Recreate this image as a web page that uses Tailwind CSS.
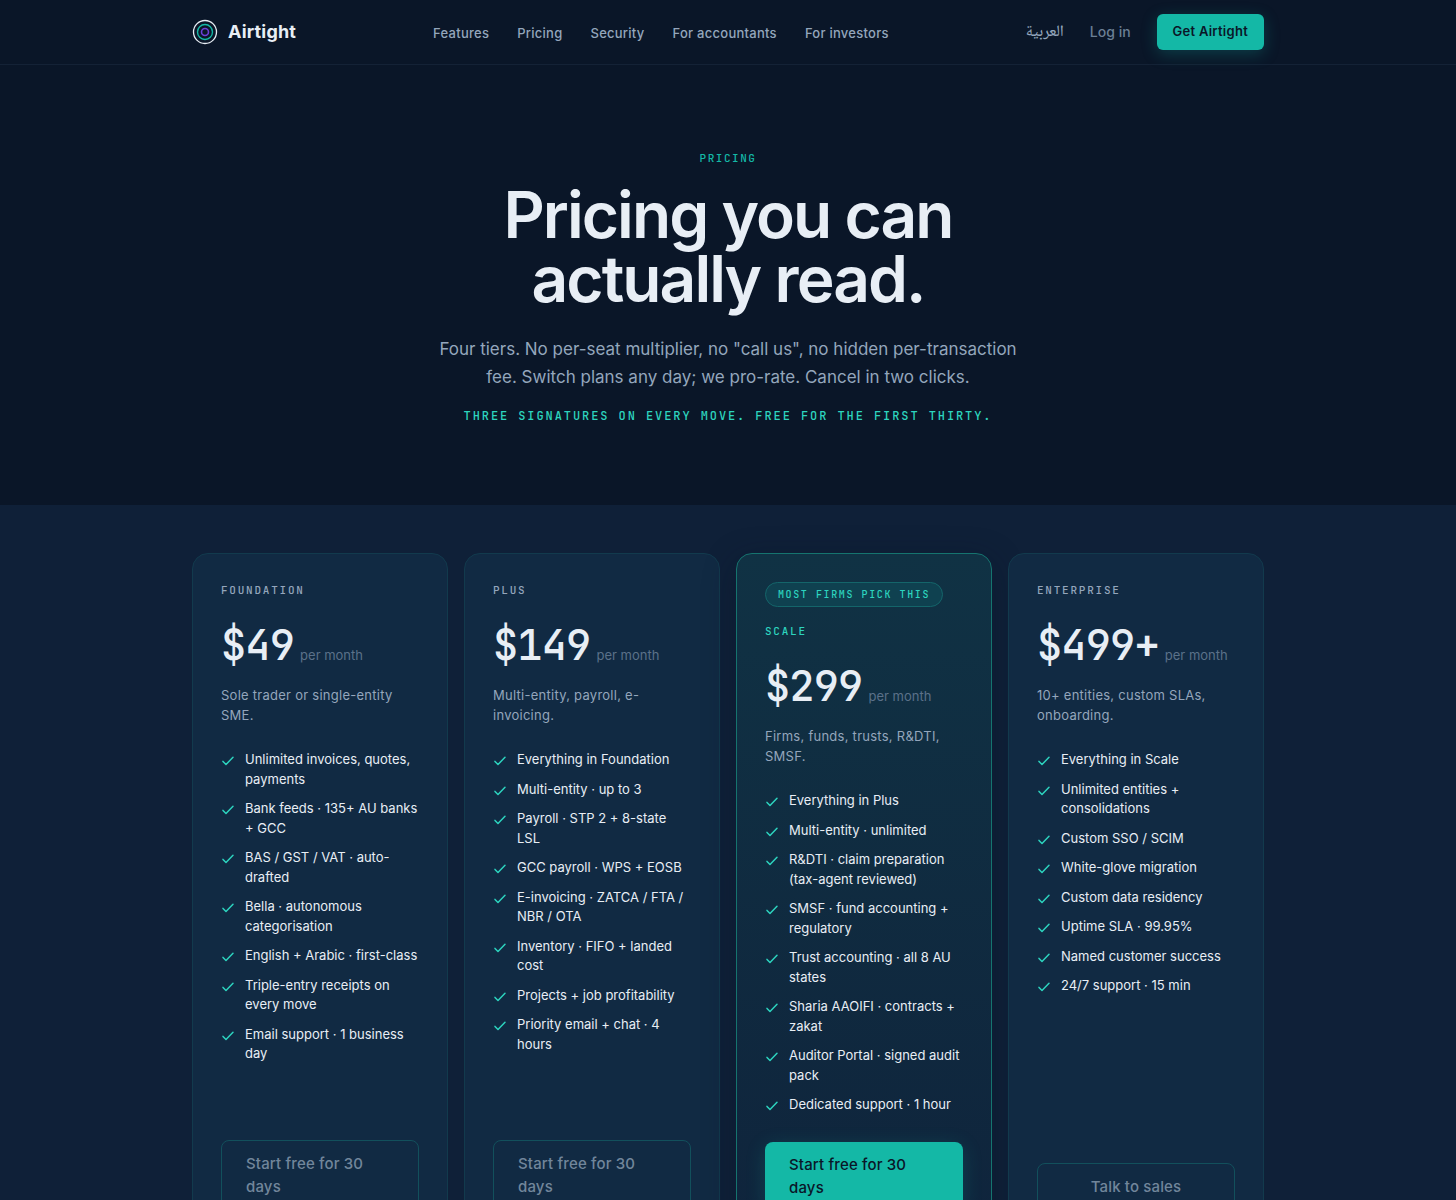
<!DOCTYPE html>
<html lang="en">
<head>
  <meta charset="UTF-8">
  <meta name="viewport" content="width=device-width, initial-scale=1.0">
  <title>Airtight | Pricing</title>
  <script src="https://cdn.jsdelivr.net/npm/@tailwindcss/browser@4"></script>
</head>
<body class="bg-[#0a1628] text-[#e8eef5] font-[Inter,sans-serif]">
  <svg class="hidden">
    <symbol id="check" viewBox="0 0 14 14">
      <path d="M2 7.4 5 10.5 12 3.3" fill="none" stroke="#2dd4bf" stroke-width="1.5" stroke-linecap="round" stroke-linejoin="round"/>
    </symbol>
  </svg>

  <header class="border-b border-[#142236]">
    <div class="max-w-[1120px] h-16 mx-auto px-6 flex items-center justify-between">
      <a href="#" class="flex items-center gap-2.5 text-lg font-bold tracking-[0.01em]">
        <svg class="w-[26px] h-[26px]" viewBox="0 0 26 26" fill="none">
          <circle cx="13" cy="13" r="11.5" stroke="#e8eef5" stroke-width="1.3"/>
          <circle cx="13" cy="13" r="7.5" stroke="#14b8a6" stroke-width="1.4"/>
          <circle cx="13" cy="13" r="3.5" stroke="#6d3fd8" stroke-width="1.6"/>
        </svg>
        Airtight
      </a>
      <nav class="flex gap-7 pt-0.5 text-[13px] leading-5 font-medium tracking-[0.02em] text-[#94a6bc]">
        <a href="#">Features</a>
        <a href="#">Pricing</a>
        <a href="#">Security</a>
        <a href="#">For accountants</a>
        <a href="#">For investors</a>
      </nav>
      <div class="flex items-center gap-[26px] font-medium">
        <a href="#" class="pt-0.5 font-['Noto_Naskh_Arabic','Noto_Sans_Arabic',Inter,serif] text-base text-[#94a6bc]">العربية</a>
        <a href="#" class="text-sm text-[#6b7f95]">Log in</a>
        <button type="button" class="h-9 px-4 rounded-md bg-[#14b8a6] text-[13px] font-semibold tracking-[0.02em] text-[#0a1628] shadow-[0_4px_16px_rgba(20,184,166,0.25)]">Get Airtight</button>
      </div>
    </div>
  </header>

  <section class="py-20 px-6 text-center">
    <p class="font-['JetBrains_Mono','Liberation_Mono',monospace] text-[11px] leading-[26px] font-medium tracking-[0.14em] text-[#14b8a6]">PRICING</p>
    <h1 class="max-w-[600px] mx-auto mt-3 text-[64px] leading-16 font-semibold tracking-[-0.03em]">Pricing you can actually read.</h1>
    <p class="max-w-[600px] mx-auto mt-6 text-[17px] leading-7 text-[#94a6bc]">Four tiers. No per-seat multiplier, no "call us", no hidden per-transaction fee. Switch plans any day; we pro-rate. Cancel in two clicks.</p>
    <p class="mt-4 font-['JetBrains_Mono','Liberation_Mono',monospace] text-xs leading-[18px] font-medium tracking-[0.16em] text-[#2dd4bf]">THREE SIGNATURES ON EVERY MOVE. FREE FOR THE FIRST THIRTY.</p>
  </section>

  <section class="bg-[#0f2038] py-12">
    <div class="max-w-[1120px] mx-auto px-6 grid grid-cols-4 gap-4">

      <article class="p-7 flex flex-col rounded-2xl border border-[#123a4d] bg-[#112a43]">
        <h2 class="font-['JetBrains_Mono','Liberation_Mono',monospace] text-[11px] leading-[17px] font-medium tracking-[0.16em] text-[#94a6bc]">FOUNDATION</h2>
        <p class="mt-6 flex items-baseline gap-1.5 text-[13px] text-[#5b7189]"><span class="font-['JetBrains_Mono','Liberation_Mono',monospace] text-[42px] leading-11 font-medium tracking-[-0.02em] text-[#e8eef5]">$49</span>per month</p>
        <p class="mt-[18px] text-[13px] leading-5 tracking-[0.02em] text-[#94a6bc]">Sole trader or single-entity SME.</p>
        <ul class="mt-[25px] mb-[27px] flex flex-col gap-2.5 text-[13px] leading-normal">
          <li class="flex gap-2.5"><svg class="w-3.5 h-3.5 mt-1 shrink-0"><use href="#check"/></svg>Unlimited invoices, quotes, payments</li>
          <li class="flex gap-2.5"><svg class="w-3.5 h-3.5 mt-1 shrink-0"><use href="#check"/></svg>Bank feeds · 135+ AU banks + GCC</li>
          <li class="flex gap-2.5"><svg class="w-3.5 h-3.5 mt-1 shrink-0"><use href="#check"/></svg>BAS / GST / VAT · auto-drafted</li>
          <li class="flex gap-2.5"><svg class="w-3.5 h-3.5 mt-1 shrink-0"><use href="#check"/></svg>Bella · autonomous categorisation</li>
          <li class="flex gap-2.5"><svg class="w-3.5 h-3.5 mt-1 shrink-0"><use href="#check"/></svg>English + Arabic · first-class</li>
          <li class="flex gap-2.5"><svg class="w-3.5 h-3.5 mt-1 shrink-0"><use href="#check"/></svg>Triple-entry receipts on every move</li>
          <li class="flex gap-2.5"><svg class="w-3.5 h-3.5 mt-1 shrink-0"><use href="#check"/></svg>Email support · 1 business day</li>
        </ul>
        <button type="button" class="mt-auto px-6 py-[11px] rounded-lg border border-[#12505c] text-left text-[15px] leading-[23px] font-medium tracking-[0.01em] text-[#71869b]">Start free for 30 days</button>
      </article>

      <article class="p-7 flex flex-col rounded-2xl border border-[#123a4d] bg-[#112a43]">
        <h2 class="font-['JetBrains_Mono','Liberation_Mono',monospace] text-[11px] leading-[17px] font-medium tracking-[0.16em] text-[#94a6bc]">PLUS</h2>
        <p class="mt-6 flex items-baseline gap-1.5 text-[13px] text-[#5b7189]"><span class="font-['JetBrains_Mono','Liberation_Mono',monospace] text-[42px] leading-11 font-medium tracking-[-0.02em] text-[#e8eef5]">$149</span>per month</p>
        <p class="mt-[18px] text-[13px] leading-5 tracking-[0.02em] text-[#94a6bc]">Multi-entity, payroll, e-invoicing.</p>
        <ul class="mt-[25px] mb-[27px] flex flex-col gap-2.5 text-[13px] leading-normal">
          <li class="flex gap-2.5"><svg class="w-3.5 h-3.5 mt-1 shrink-0"><use href="#check"/></svg>Everything in Foundation</li>
          <li class="flex gap-2.5"><svg class="w-3.5 h-3.5 mt-1 shrink-0"><use href="#check"/></svg>Multi-entity · up to 3</li>
          <li class="flex gap-2.5"><svg class="w-3.5 h-3.5 mt-1 shrink-0"><use href="#check"/></svg>Payroll · STP 2 + 8-state LSL</li>
          <li class="flex gap-2.5"><svg class="w-3.5 h-3.5 mt-1 shrink-0"><use href="#check"/></svg>GCC payroll · WPS + EOSB</li>
          <li class="flex gap-2.5"><svg class="w-3.5 h-3.5 mt-1 shrink-0"><use href="#check"/></svg>E-invoicing · ZATCA / FTA / NBR / OTA</li>
          <li class="flex gap-2.5"><svg class="w-3.5 h-3.5 mt-1 shrink-0"><use href="#check"/></svg>Inventory · FIFO + landed cost</li>
          <li class="flex gap-2.5"><svg class="w-3.5 h-3.5 mt-1 shrink-0"><use href="#check"/></svg>Projects + job profitability</li>
          <li class="flex gap-2.5"><svg class="w-3.5 h-3.5 mt-1 shrink-0"><use href="#check"/></svg>Priority email + chat · 4 hours</li>
        </ul>
        <button type="button" class="mt-auto px-6 py-[11px] rounded-lg border border-[#12505c] text-left text-[15px] leading-[23px] font-medium tracking-[0.01em] text-[#71869b]">Start free for 30 days</button>
      </article>

      <!-- highlighted tier -->
      <article class="p-7 flex flex-col items-start rounded-2xl border border-[#15746f] bg-linear-to-b from-[#103244] to-[#0f243c] shadow-[0_8px_32px_rgba(10,22,40,0.4)]">
        <p class="mb-4 px-3 py-1 rounded-full border border-[#14656a] bg-[#0f4150] font-['JetBrains_Mono','Liberation_Mono',monospace] text-[10px] leading-[15px] font-medium tracking-[0.16em] text-[#2dd4bf]">MOST FIRMS PICK THIS</p>
        <h2 class="font-['JetBrains_Mono','Liberation_Mono',monospace] text-[11px] leading-[17px] font-medium tracking-[0.16em] text-[#2dd4bf]">SCALE</h2>
        <p class="mt-6 flex items-baseline gap-1.5 text-[13px] text-[#5b7189]"><span class="font-['JetBrains_Mono','Liberation_Mono',monospace] text-[42px] leading-11 font-medium tracking-[-0.02em] text-[#e8eef5]">$299</span>per month</p>
        <p class="mt-[18px] text-[13px] leading-5 tracking-[0.02em] text-[#94a6bc]">Firms, funds, trusts, R&amp;DTI, SMSF.</p>
        <ul class="mt-[25px] mb-[27px] flex flex-col gap-2.5 text-[13px] leading-normal">
          <li class="flex gap-2.5"><svg class="w-3.5 h-3.5 mt-1 shrink-0"><use href="#check"/></svg>Everything in Plus</li>
          <li class="flex gap-2.5"><svg class="w-3.5 h-3.5 mt-1 shrink-0"><use href="#check"/></svg>Multi-entity · unlimited</li>
          <li class="flex gap-2.5"><svg class="w-3.5 h-3.5 mt-1 shrink-0"><use href="#check"/></svg>R&amp;DTI · claim preparation (tax-agent reviewed)</li>
          <li class="flex gap-2.5"><svg class="w-3.5 h-3.5 mt-1 shrink-0"><use href="#check"/></svg>SMSF · fund accounting + regulatory</li>
          <li class="flex gap-2.5"><svg class="w-3.5 h-3.5 mt-1 shrink-0"><use href="#check"/></svg>Trust accounting · all 8 AU states</li>
          <li class="flex gap-2.5"><svg class="w-3.5 h-3.5 mt-1 shrink-0"><use href="#check"/></svg>Sharia AAOIFI · contracts + zakat</li>
          <li class="flex gap-2.5"><svg class="w-3.5 h-3.5 mt-1 shrink-0"><use href="#check"/></svg>Auditor Portal · signed audit pack</li>
          <li class="flex gap-2.5"><svg class="w-3.5 h-3.5 mt-1 shrink-0"><use href="#check"/></svg>Dedicated support · 1 hour</li>
        </ul>
        <button type="button" class="mt-auto w-full px-6 py-[11px] rounded-lg bg-[#14b8a6] text-left text-[15px] leading-[23px] font-medium tracking-[0.01em] text-[#0a1628] shadow-[0_4px_20px_rgba(20,184,166,0.2)]">Start free for 30 days</button>
      </article>

      <article class="p-7 flex flex-col rounded-2xl border border-[#123a4d] bg-[#112a43]">
        <h2 class="font-['JetBrains_Mono','Liberation_Mono',monospace] text-[11px] leading-[17px] font-medium tracking-[0.16em] text-[#94a6bc]">ENTERPRISE</h2>
        <p class="mt-6 flex items-baseline gap-1.5 text-[13px] text-[#5b7189]"><span class="font-['JetBrains_Mono','Liberation_Mono',monospace] text-[42px] leading-11 font-medium tracking-[-0.02em] text-[#e8eef5]">$499+</span>per month</p>
        <p class="mt-[18px] text-[13px] leading-5 tracking-[0.02em] text-[#94a6bc]">10+ entities, custom SLAs, onboarding.</p>
        <ul class="mt-[25px] mb-[27px] flex flex-col gap-2.5 text-[13px] leading-normal">
          <li class="flex gap-2.5"><svg class="w-3.5 h-3.5 mt-1 shrink-0"><use href="#check"/></svg>Everything in Scale</li>
          <li class="flex gap-2.5"><svg class="w-3.5 h-3.5 mt-1 shrink-0"><use href="#check"/></svg>Unlimited entities + consolidations</li>
          <li class="flex gap-2.5"><svg class="w-3.5 h-3.5 mt-1 shrink-0"><use href="#check"/></svg>Custom SSO / SCIM</li>
          <li class="flex gap-2.5"><svg class="w-3.5 h-3.5 mt-1 shrink-0"><use href="#check"/></svg>White-glove migration</li>
          <li class="flex gap-2.5"><svg class="w-3.5 h-3.5 mt-1 shrink-0"><use href="#check"/></svg>Custom data residency</li>
          <li class="flex gap-2.5"><svg class="w-3.5 h-3.5 mt-1 shrink-0"><use href="#check"/></svg>Uptime SLA · 99.95%</li>
          <li class="flex gap-2.5"><svg class="w-3.5 h-3.5 mt-1 shrink-0"><use href="#check"/></svg>Named customer success</li>
          <li class="flex gap-2.5"><svg class="w-3.5 h-3.5 mt-1 shrink-0"><use href="#check"/></svg>24/7 support · 15 min</li>
        </ul>
        <button type="button" class="mt-auto px-6 py-[11px] rounded-lg border border-[#12505c] text-[15px] leading-[23px] font-medium tracking-[0.01em] text-[#71869b]">Talk to sales</button>
      </article>

    </div>
  </section>
</body>
</html>
